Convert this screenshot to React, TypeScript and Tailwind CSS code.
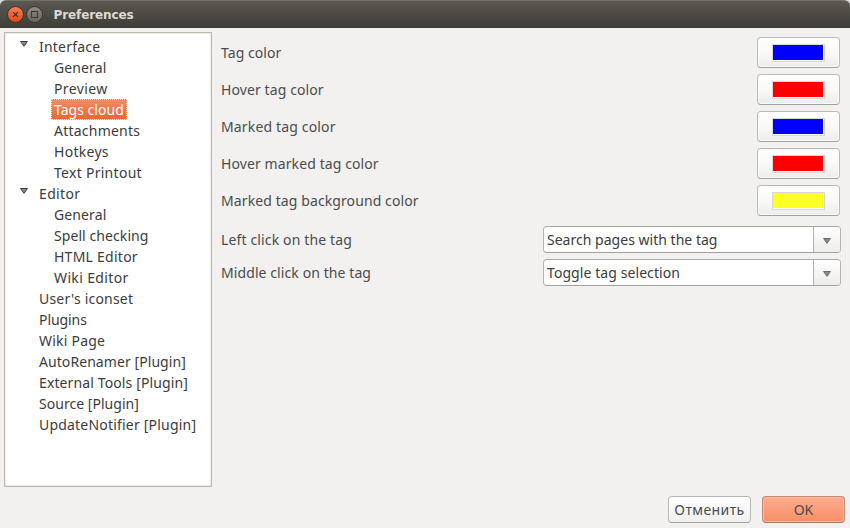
type TreeRow = { text: string; level: number; track: string; open?: boolean; selected?: boolean };

const tree: TreeRow[] = [
  { text: "Interface", level: 0, track: "tracking-[0.22px]", open: true },
  { text: "General", level: 1, track: "tracking-[0.12px]" },
  { text: "Preview", level: 1, track: "tracking-[0.4px]" },
  { text: "Tags cloud", level: 1, track: "tracking-[0.03px]", selected: true },
  { text: "Attachments", level: 1, track: "tracking-[0.23px]" },
  { text: "Hotkeys", level: 1, track: "tracking-[0.28px]" },
  { text: "Text Printout", level: 1, track: "tracking-[0.28px]" },
  { text: "Editor", level: 0, track: "tracking-[0.35px]", open: true },
  { text: "General", level: 1, track: "tracking-[0.12px]" },
  { text: "Spell checking", level: 1, track: "tracking-[0.08px]" },
  { text: "HTML Editor", level: 1, track: "tracking-[0.25px]" },
  { text: "Wiki Editor", level: 1, track: "tracking-[0.36px]" },
  { text: "User's iconset", level: 0, track: "tracking-[0.2px]" },
  { text: "Plugins", level: 0, track: "tracking-[-0.07px]" },
  { text: "Wiki Page", level: 0, track: "tracking-[0.22px]" },
  { text: "AutoRenamer [Plugin]", level: 0, track: "tracking-[0.07px]" },
  { text: "External Tools [Plugin]", level: 0, track: "tracking-[0.12px]" },
  { text: "Source [Plugin]", level: 0, track: "tracking-[0.03px]" },
  { text: "UpdateNotifier [Plugin]", level: 0, track: "tracking-[0.2px]" },
];

const colors = [
  { label: "Tag color", fill: "bg-[#0000ff]", track: "tracking-[0.06px]" },
  { label: "Hover tag color", fill: "bg-[#ff0000]", track: "tracking-[0.1px]" },
  { label: "Marked tag color", fill: "bg-[#0000ff]", track: "tracking-[0.15px]" },
  { label: "Hover marked tag color", fill: "bg-[#ff0000]", track: "tracking-[0.1px]" },
  { label: "Marked tag background color", fill: "bg-[#fcff24]", track: "tracking-[0.1px]" },
];

const actions = [
  { label: "Left click on the tag", track: "tracking-[0.14px]", value: "Search pages with the tag", valueTrack: "tracking-[0.02px]" },
  { label: "Middle click on the tag", track: "tracking-[0.09px]", value: "Toggle tag selection", valueTrack: "tracking-[0.08px]" },
];

function Triangle({ stroke, fill }: { stroke: string; fill: string }) {
  return (
    <svg width="8" height="6" viewBox="0 0 8 6" className="shrink-0">
      <path d="M0.6 0.5H7.4L4 5.4Z" fill={fill} stroke={stroke} strokeWidth="1" />
    </svg>
  );
}

function TitleBar() {
  return (
    <div className="bg-[#dcdad7]">
      <header className="flex h-7 items-center rounded-t-[6px] border-t border-[#73716a] bg-linear-to-b from-[#5b5950] to-[#3d3c37] pl-[6px]">
        <svg width="38" height="20" viewBox="0 0 38 20" className="mt-px">
          <defs>
            <linearGradient id="close" x1="0" y1="0" x2="0" y2="1">
              <stop offset="0" stopColor="#f68258" />
              <stop offset="1" stopColor="#dd4814" />
            </linearGradient>
            <linearGradient id="max" x1="0" y1="0" x2="0" y2="1">
              <stop offset="0" stopColor="#8f8d84" />
              <stop offset="1" stopColor="#67655d" />
            </linearGradient>
          </defs>
          <circle cx="9.5" cy="9.5" r="8" fill="url(#close)" stroke="#34332e" />
          <path d="M7.1 7.1L11.9 11.9M11.9 7.1L7.1 11.9" stroke="#41281c" strokeWidth="1.2" />
          <circle cx="28.5" cy="9.5" r="8" fill="url(#max)" stroke="#34332e" />
          <rect x="25.5" y="6.5" width="6" height="6" fill="none" stroke="#3a3934" strokeWidth="1.1" />
        </svg>
        <h1 className="pl-[9.5px] font-['DejaVu_Sans',sans-serif] text-[12px] leading-5 font-bold tracking-[-0.1px] text-[#dfdbd2]">Preferences</h1>
      </header>
    </div>
  );
}

export default function App() {
  return (
    <div className="flex h-[528px] w-[850px] flex-col overflow-hidden bg-[#f2f1f0] font-['Noto_Sans',sans-serif] text-[14px] leading-[21px] whitespace-nowrap text-[#4c4c4c]">
      <TitleBar />
      <div className="flex pt-1 pl-1">
        <nav className="h-[455px] w-[208px] border border-[#bcb8b2] bg-white pt-[3px] text-[#3c3c3c] shadow-[inset_0_0_0_1px_#edebe9]">
          {tree.map((row, i) => (
            <div key={i} className={row.level ? "flex h-[21px] pl-[46px]" : "flex h-[21px] pl-[15px]"}>
              {row.level === 0 && (
                <span className="w-[19px] pt-[5px]">
                  {row.open && <span className="flex"><Triangle stroke="#3c3c3c" fill="#8a8a8a" /></span>}
                </span>
              )}
              {row.selected ? (
                <span className="h-[21px] w-[76px] border border-dotted border-[#fbe0d5] bg-linear-to-b from-[#f58a60] to-[#ea6635] pl-[2px] leading-[19px] text-white">
                  <span className={row.track}>{row.text}</span>
                </span>
              ) : (
                <span className={row.level ? `pl-[3px] ${row.track}` : row.track}>{row.text}</span>
              )}
            </div>
          ))}
        </nav>
        <main className="w-[638px] pt-[5px] pr-[9px] pl-[9px]">
          <div className="flex flex-col gap-[6px]">
            {colors.map((c) => (
              <div key={c.label} className="flex h-[31px] items-center justify-between pr-px">
                <span className={c.track}>{c.label}</span>
                <button className="flex h-[31px] w-[83px] items-center justify-center rounded-[4px] border border-[#bdbbb8] border-b-[#a3a19e] bg-linear-to-b from-white via-[#f9f9f8] to-[#ececeb] shadow-[inset_0_0_0_1px_#ffffffb0]">
                  <span className="flex h-[18px] w-[53px] border border-[#dad8d6] bg-white">
                    <span className={`h-[15px] w-[50px] ${c.fill}`} />
                  </span>
                </button>
              </div>
            ))}
          </div>
          <div className="flex flex-col gap-[6px] pt-[10px]">
            {actions.map((a) => (
              <div key={a.label} className="flex h-[27px] items-center justify-between">
                <span className={a.track}>{a.label}</span>
                <div className="flex h-[27px] w-[298px] overflow-hidden rounded-[4px] border border-[#b4b2af] border-t-[#a9a7a4] border-b-[#a3a19e] bg-white text-[#3c3c3c]">
                  <span className={`w-[269px] py-[2px] pl-[3px] ${a.valueTrack}`}>{a.value}</span>
                  <span className="flex w-[27px] items-center justify-center border-l border-[#b4b2af] bg-linear-to-b from-white to-[#ececeb] pt-[3px]">
                    <Triangle stroke="#6e6e6e" fill="#8a8a8a" />
                  </span>
                </div>
              </div>
            ))}
          </div>
        </main>
      </div>
      <footer className="flex justify-end gap-[11px] pt-[9px] pr-[5px]">
        <button className="h-[27px] w-[83px] rounded-[4px] border border-[#bab8b5] border-b-[#a3a19e] bg-linear-to-b from-white to-[#f0f0ef] leading-[25px] tracking-[0.4px]">
          Отменить
        </button>
        <button className="h-[27px] w-[83px] rounded-[4px] border border-[#c08a74] border-b-[#a97a68] bg-linear-to-b from-[#ffae8f] to-[#f78e66] leading-[25px] shadow-[inset_0_0_0_1px_#ffb89c]">
          OK
        </button>
      </footer>
    </div>
  );
}
